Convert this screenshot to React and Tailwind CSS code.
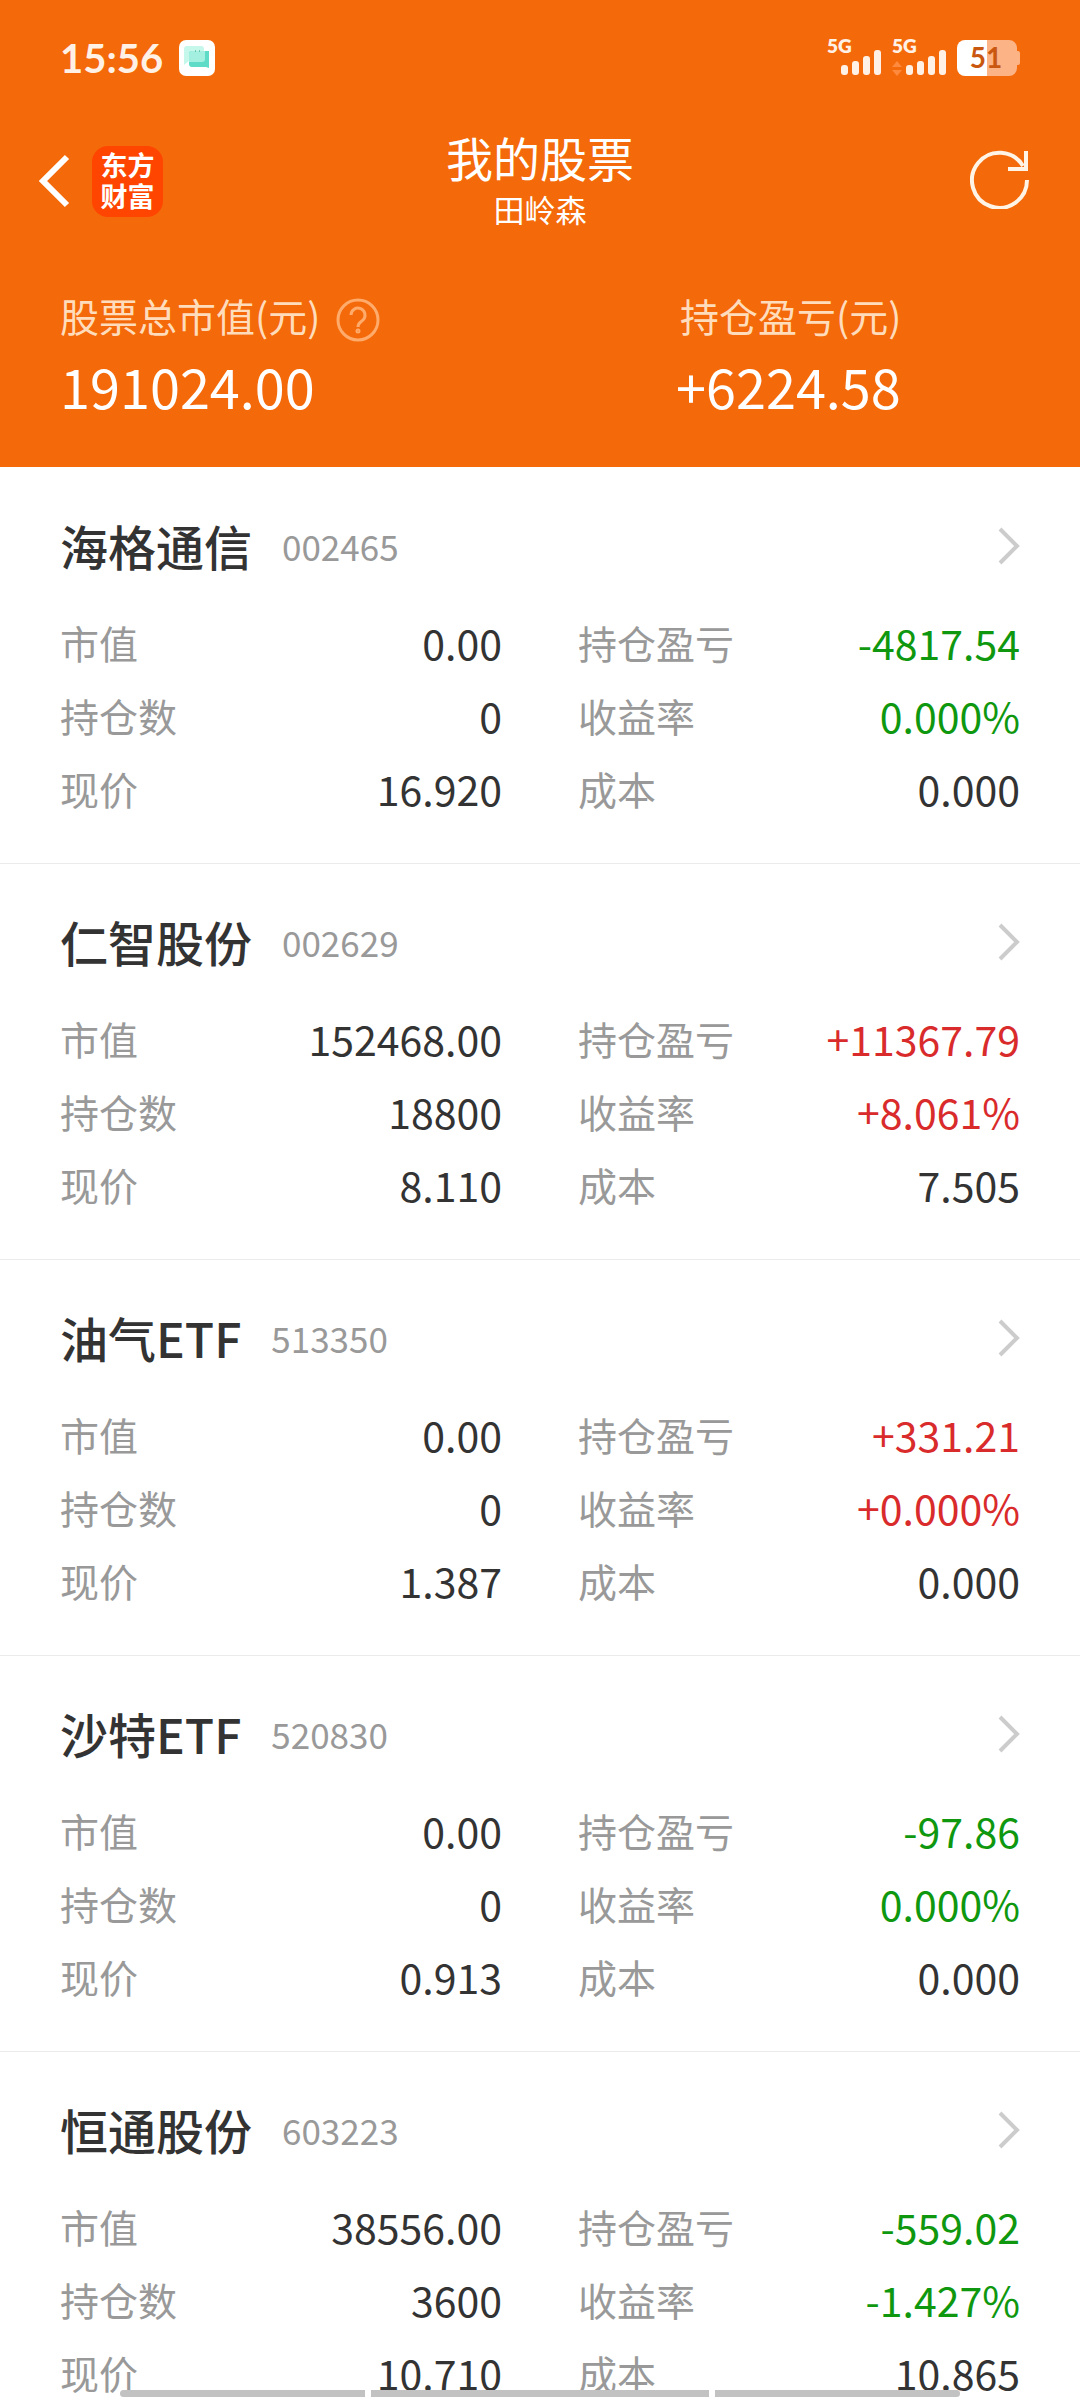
import React from 'react';

const RED = 'text-[#d92b2b]';
const GREEN = 'text-[#0f980f]';

const stocks = [
  { name: '海格通信', code: '002465', value: '0.00', profit: '-4817.54', count: '0', rate: '0.000%', price: '16.920', cost: '0.000', color: GREEN },
  { name: '仁智股份', code: '002629', value: '152468.00', profit: '+11367.79', count: '18800', rate: '+8.061%', price: '8.110', cost: '7.505', color: RED },
  { name: '油气ETF', code: '513350', value: '0.00', profit: '+331.21', count: '0', rate: '+0.000%', price: '1.387', cost: '0.000', color: RED },
  { name: '沙特ETF', code: '520830', value: '0.00', profit: '-97.86', count: '0', rate: '0.000%', price: '0.913', cost: '0.000', color: GREEN },
  { name: '恒通股份', code: '603223', value: '38556.00', profit: '-559.02', count: '3600', rate: '-1.427%', price: '10.710', cost: '10.865', color: GREEN },
];

function Signal({ data }) {
  return (
    <svg width="56" height="50" viewBox="0 -6 56 50" aria-hidden="true">
      <text x="0" y="14" fontSize="19" fontWeight="800" fill="#fff1e6" fontFamily="Lato">5G</text>
      {data && <path d="M5 22l5 6H0zM5 37l-5-6h10z" fill="#ff8a3d" />}
      <g fill="#fff1e6">
        <rect x="14" y="26" width="7" height="10" rx="3" />
        <rect x="25" y="22" width="7" height="14" rx="3" />
        <rect x="36" y="17" width="7" height="19" rx="3" />
        <rect x="47" y="11" width="7" height="25" rx="3" />
      </g>
    </svg>
  );
}

function StatusBar() {
  return (
    <div className="flex h-[116px] items-center justify-between px-[60px]">
      <div className="flex items-center gap-4">
        <span className="font-['Lato'] text-[40px] leading-none font-bold text-[#fff1e6]">15:56</span>
        <svg width="36" height="36" viewBox="0 0 36 36" aria-hidden="true">
          <rect width="36" height="36" rx="7" fill="#fff" />
          <path d="M8 6h14a3 3 0 0 1 3 3v12H10l-5 4V9a3 3 0 0 1 3-3z" fill="#c5f7ea" />
          <path d="M13 11h17v17l-3-1H13a3 3 0 0 1-3-3V14a3 3 0 0 1 3-3z" fill="#5fdcc8" />
          <path d="M13 11h13v8a3 3 0 0 1-3 3H10v-8a3 3 0 0 1 3-3z" fill="#a3f0e0" />
          <path d="M16 11h1M20 11h1" stroke="#2a9d8a" />
        </svg>
      </div>
      <div className="flex items-center gap-[9px]">
        <Signal />
        <Signal data />
        <svg width="63" height="36" viewBox="0 0 63 36" aria-hidden="true">
          <path d="M30 0h22a8 8 0 0 1 8 8v3h1a2 2 0 0 1 2 2v10a2 2 0 0 1-2 2h-1v3a8 8 0 0 1-8 8H30z" fill="#fcb385" />
          <path d="M8 0h22v36H8a8 8 0 0 1-8-8V8a8 8 0 0 1 8-8z" fill="#fff" />
          <text x="29" y="28" textAnchor="middle" fontSize="28" fontWeight="700" fill="#c9570f" fontFamily="Lato">51</text>
        </svg>
      </div>
    </div>
  );
}

function NavBar() {
  return (
    <div className="grid h-[130px] grid-cols-[1fr_auto_1fr] items-center px-[50px]">
      <div className="-ml-3 flex items-center gap-[22px]">
        <button aria-label="返回">
          <svg width="32" height="54" viewBox="0 0 32 54" fill="none" stroke="#fff" strokeWidth="6">
            <path d="M29 3L5 27l24 24" />
          </svg>
        </button>
        <div className="flex size-[71px] flex-col items-center rounded-[16px] bg-[#ff4500] pt-[3px] font-['Noto_Sans_CJK_SC',sans-serif] text-[27px] leading-[31px] font-bold text-white">
          <span>东方</span>
          <span>财富</span>
        </div>
      </div>
      <div className="flex flex-col items-center">
        <h1 className="text-[47px] leading-[56px]">我的股票</h1>
        <p className="text-[31px] leading-[48px]">田岭森</p>
      </div>
      <button aria-label="刷新" className="justify-self-end pb-1">
        <svg width="60" height="60" viewBox="0 0 60 60" fill="none" stroke="#fff4e6" strokeWidth="4">
          <path d="M57 31A27.500 27.500 0 1 1 53 17" />
          <path d="M38 20h18M56 2v20" />
        </svg>
      </button>
    </div>
  );
}

function Summary() {
  return (
    <div className="grid grid-cols-[616px_1fr] px-[60px] pt-[44px] pb-[42px]">
      <div>
        <div className="flex h-[56px] items-start gap-4 text-[39px] leading-[50px] text-[#ffdcbc]">
          股票总市值(元)
          <button aria-label="说明" className="mt-2">
            <svg width="44" height="44" viewBox="0 0 44 44" fill="none" stroke="#ffab6c" strokeWidth="3">
              <circle cx="22" cy="22" r="20" />
              <path d="M15 17a7 7 0 1 1 12 5c-3 3-5 3-5 7" />
              <circle cx="22" cy="33" r="1" />
            </svg>
          </button>
        </div>
        <div className="text-[54px] leading-[79px]">191024.00</div>
      </div>
      <div>
        <div className="h-[56px] pl-1 text-[39px] leading-[50px] text-[#ffdcbc]">持仓盈亏(元)</div>
        <div className="text-[54px] leading-[79px]">+6224.58</div>
      </div>
    </div>
  );
}

function Field({ label, value, color = 'text-[#333333]' }) {
  return (
    <div className="flex h-[73px] items-center justify-between">
      <dt className="text-[39px] text-[#999999]">{label}</dt>
      <dd className={`text-[41px] ${color}`}>{value}</dd>
    </div>
  );
}

function StockCard({ stock }) {
  return (
    <li className="border-t border-[#ebebeb] px-[60px] pt-[41px] pb-[38px] first:border-transparent">
      <a href="#" className="flex h-[97px] items-start justify-between">
        <span className="flex h-[72px] items-center gap-[30px]">
          <span className="text-[48px] leading-none font-medium text-[#333333]">{stock.name}</span>
          <span className="text-[35px] leading-none text-[#999999]">{stock.code}</span>
        </span>
        <svg className="mt-[18px]" width="22" height="38" viewBox="0 0 22 38" fill="none" stroke="#cccccc" strokeWidth="4">
          <path d="M2 2l17 17L2 36" />
        </svg>
      </a>
      <dl className="grid grid-cols-2 gap-x-[76px]">
        <Field label="市值" value={stock.value} />
        <Field label="持仓盈亏" value={stock.profit} color={stock.color} />
        <Field label="持仓数" value={stock.count} />
        <Field label="收益率" value={stock.rate} color={stock.color} />
        <Field label="现价" value={stock.price} />
        <Field label="成本" value={stock.cost} />
      </dl>
    </li>
  );
}

export default function App() {
  return (
    <div className="relative flex h-screen flex-col bg-white font-['Noto_Sans_CJK_SC',sans-serif]">
      <header className="shrink-0 bg-[#f46909] text-white">
        <StatusBar />
        <NavBar />
        <Summary />
      </header>
      <main className="min-h-0 flex-1 overflow-y-auto [scrollbar-width:none]">
        <ul>
          {stocks.map((stock) => (
            <StockCard key={stock.code} stock={stock} />
          ))}
        </ul>
      </main>
      {/* system gesture bar */}
      <div className="absolute inset-x-[120px] bottom-[3px] flex h-[7px] gap-[6px]">
        <div className="flex-[245] rounded-l-full bg-[#c2c2c2]" />
        <div className="flex-[338] bg-[#c2c2c2]" />
        <div className="flex-[245] rounded-r-full bg-[#c2c2c2]" />
      </div>
    </div>
  );
}
